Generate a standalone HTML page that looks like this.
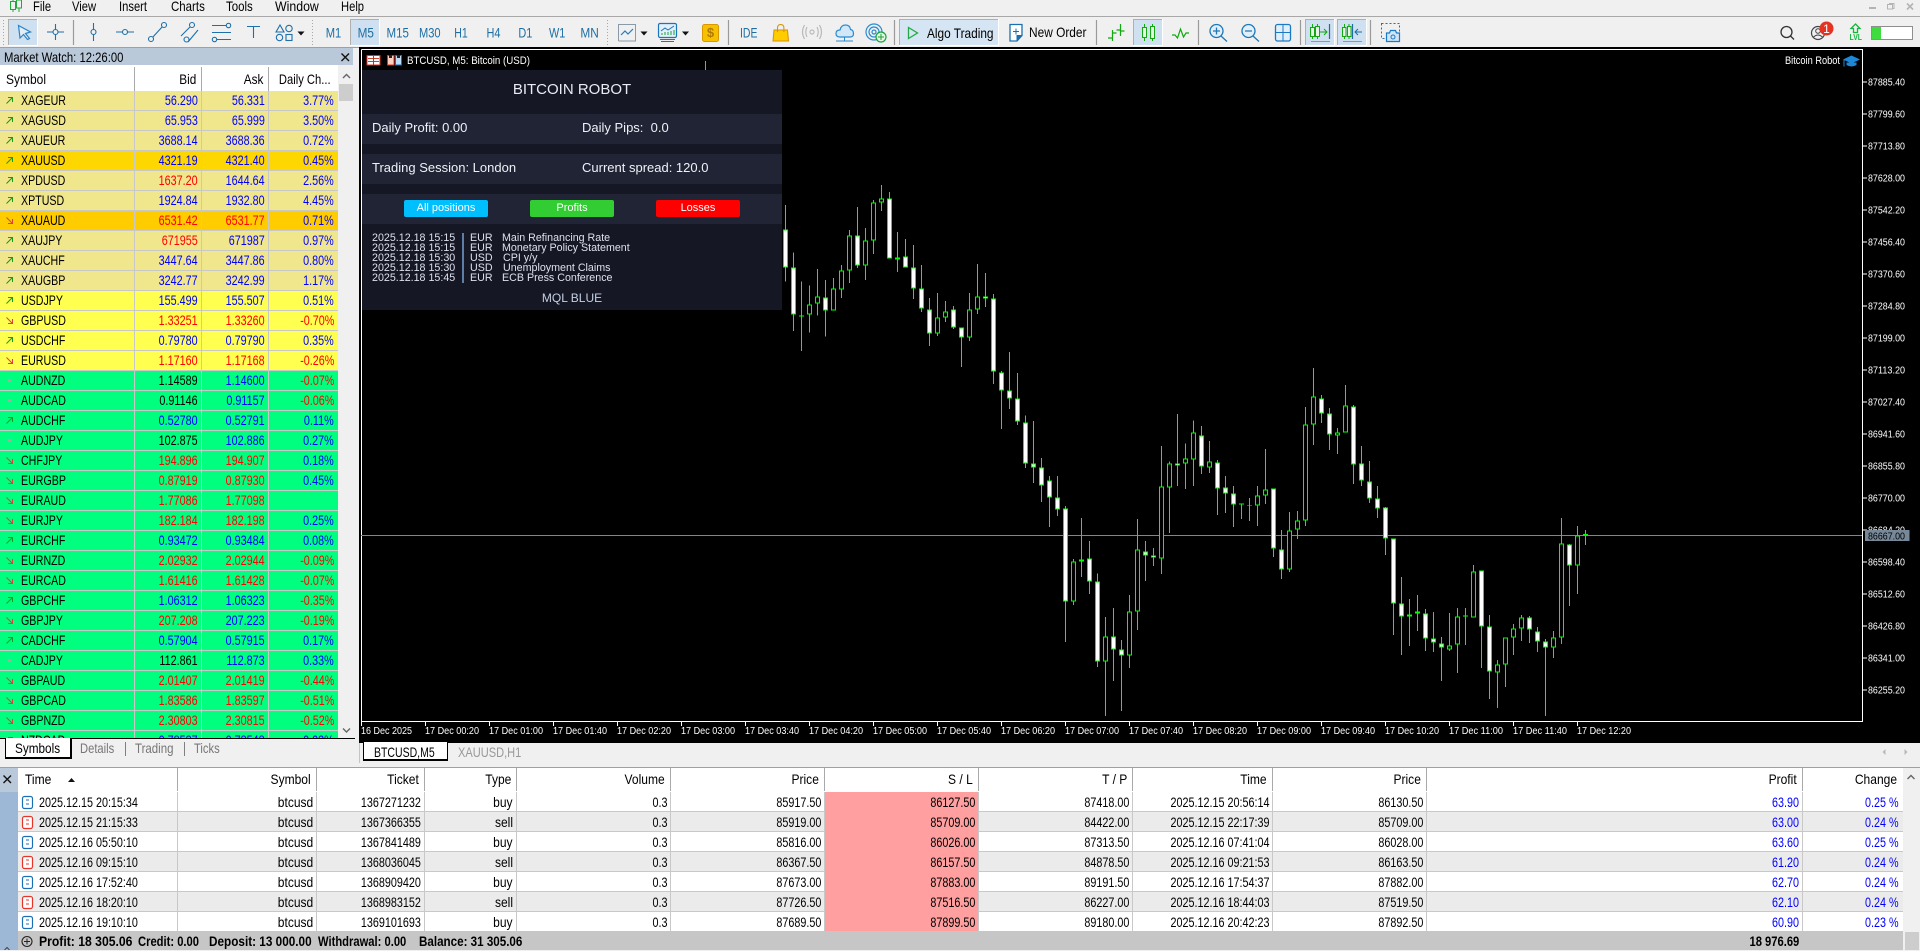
<!DOCTYPE html>
<html><head><meta charset="utf-8"><title>MetaTrader</title>
<style>
html,body{margin:0;padding:0}
body{width:1920px;height:950px;overflow:hidden;background:#f0f0f0;position:relative;font-family:"Liberation Sans",sans-serif;color:#000}
.a{position:absolute}
.t{position:absolute;white-space:nowrap;font-size:14px;line-height:20px;transform:scaleX(.82);transform-origin:0 0}
#mw{position:absolute;left:0;top:91px;width:338px;height:647px;overflow:hidden}
.r{height:19px;border-bottom:1px solid #c8c8c8;position:relative;font-size:14px;line-height:19px;white-space:nowrap}
.r span{position:absolute;top:0;transform:scaleX(.77);transform-origin:100% 0;color:#00f}
.r span:nth-of-type(1){left:21px;color:#000;transform-origin:0 0;transform:scaleX(.76)}
.r span:nth-of-type(2){right:140px}
.r span:nth-of-type(3){right:73px}
.r span:nth-of-type(4){right:4px}
.r span.R{color:#f00}.r span.K{color:#000}
.r svg{position:absolute;left:5px;top:5px;width:9px;height:9px}
.x{background:#f0e68c}.g{background:#ffd700}.o{background:#ffcc00}.y{background:#ffff4f}.s{background:#00ff7f}
#bt{position:absolute;left:18px;top:792px;width:1885px;height:139px;overflow:hidden}
.q{position:relative;height:19px;border-bottom:1px solid #c8c8c8;font-size:14px;line-height:20px;white-space:nowrap;background:#fff}
.q.e{background:#ebebeb}
.q i{position:absolute;left:807px;width:153px;top:0;height:20px;background:#ff9f9f}
.q span,.hd span{position:absolute;top:0;transform:scaleX(.77);transform-origin:100% 0}
.q span:nth-of-type(1){left:21px;transform-origin:0 0}
.q span:nth-of-type(2),.q span:nth-of-type(4){transform:scaleX(.86)}
.q span:nth-of-type(2),.hd span:nth-of-type(2){right:1590px}
.q span:nth-of-type(3),.hd span:nth-of-type(3){right:1482px}
.q span:nth-of-type(4),.hd span:nth-of-type(4){right:1390px}
.q span:nth-of-type(5),.hd span:nth-of-type(5){right:1236px}
.q span:nth-of-type(6),.hd span:nth-of-type(6){right:1082px}
.q span:nth-of-type(7),.hd span:nth-of-type(7){right:928px}
.q span:nth-of-type(8),.hd span:nth-of-type(8){right:774px}
.q span:nth-of-type(9),.hd span:nth-of-type(9){right:634px}
.q span:nth-of-type(10),.hd span:nth-of-type(10){right:480px}
.q span:nth-of-type(11),.hd span:nth-of-type(11){right:104px;color:#00f}
.q span:nth-of-type(12),.hd span:nth-of-type(12){right:4px;color:#00f}
.hd{position:absolute;left:16px;top:767px;width:1885px;height:23px;font-size:14px;line-height:24px;white-space:nowrap}
.hd span{transform:scaleX(.86);color:#000!important}
.hd span:nth-of-type(1){left:8.5px;transform-origin:0 0}
.p{position:absolute;color:#eef1f7;font-size:13px;line-height:14px;white-space:nowrap}
.n{position:absolute;color:#dde1ec;font-size:10.7px;line-height:10px;white-space:nowrap}
.b{position:absolute;top:200px;width:84px;height:17px;border-radius:2px;color:#fff;font-size:11px;line-height:17px;text-align:center}
.tt{font-family:"Liberation Sans",sans-serif}
</style></head>
<body>
<!-- top bars -->
<div class="a" style="left:0;top:16px;width:1920px;height:1px;background:#a8a8a8"></div>
<span class="t" style="left:33px;top:-4px;transform:scaleX(.8)">File</span>
<span class="t" style="left:72px;top:-4px;transform:scaleX(.8)">View</span>
<span class="t" style="left:119px;top:-4px;transform:scaleX(.8)">Insert</span>
<span class="t" style="left:171px;top:-4px;transform:scaleX(.82)">Charts</span>
<span class="t" style="left:226px;top:-4px;transform:scaleX(.82)">Tools</span>
<span class="t" style="left:275px;top:-4px;transform:scaleX(.88)">Window</span>
<span class="t" style="left:341px;top:-4px;transform:scaleX(.8)">Help</span>

<!-- market watch -->
<div class="a" style="left:0;top:47px;width:359px;height:1px;background:#a0a0a0"></div>
<div class="a" style="left:0;top:48px;width:353px;height:17px;background:#b9c9d9"></div>
<span class="t" style="left:4px;top:47px;transform:scaleX(.806)">Market Watch: 12:26:00</span>
<div class="a" style="left:0;top:65px;width:338px;height:26px;background:#fff"></div>
<span class="t" style="left:6px;top:69px;transform:scaleX(.857)">Symbol</span>
<span class="t" style="right:1724px;top:69px;transform:scaleX(.84);transform-origin:100% 0">Bid</span>
<span class="t" style="right:1657px;top:69px;transform:scaleX(.84);transform-origin:100% 0">Ask</span>
<span class="t" style="right:1589px;top:69px;transform:scaleX(.8);transform-origin:100% 0">Daily Ch...</span>
<div class="a" style="left:134px;top:67px;width:1px;height:24px;background:#aaa"></div>
<div class="a" style="left:201px;top:67px;width:1px;height:24px;background:#aaa"></div>
<div class="a" style="left:268px;top:67px;width:1px;height:24px;background:#aaa"></div>
<div class="a" style="left:339px;top:84px;width:14px;height:17px;background:#cdcdcd"></div>

<svg width="0" height="0" style="position:absolute"><defs>
<path id="u" d="M1.5 7.5L7.5 1.5M3 1.5H7.5V6" stroke="#1a9c1a" stroke-width="1" fill="none"/>
<path id="d" d="M1.5 1.5L7.5 7.5M7.5 3V7.5H3" stroke="#e0403a" stroke-width="1" fill="none"/>
<rect id="m" x="3" y="3" width="3" height="3" fill="#a8a8a8"/>
<g id="ib"><rect x="22.5" y="796.5" width="10" height="12" rx="2" fill="#fff" stroke="#1a6fb5" stroke-width="1.2"/><path d="M26 800h3M26 804h3" stroke="#1a6fb5"/></g>
<g id="is"><rect x="22.5" y="796.5" width="10" height="12" rx="2" fill="#fff" stroke="#e5352b" stroke-width="1.2"/><path d="M26 800h3M26 804h3" stroke="#e5352b"/></g>
</defs></svg>

<div id="mw">
<div class="r x"><svg><use href="#u"/></svg><span>XAGEUR</span><span>56.290</span><span>56.331</span><span>3.77%</span></div>
<div class="r x"><svg><use href="#u"/></svg><span>XAGUSD</span><span>65.953</span><span>65.999</span><span>3.50%</span></div>
<div class="r x"><svg><use href="#u"/></svg><span>XAUEUR</span><span>3688.14</span><span>3688.36</span><span>0.72%</span></div>
<div class="r g"><svg><use href="#u"/></svg><span>XAUUSD</span><span>4321.19</span><span>4321.40</span><span>0.45%</span></div>
<div class="r x"><svg><use href="#u"/></svg><span>XPDUSD</span><span class="R">1637.20</span><span>1644.64</span><span>2.56%</span></div>
<div class="r x"><svg><use href="#u"/></svg><span>XPTUSD</span><span>1924.84</span><span>1932.80</span><span>4.45%</span></div>
<div class="r o"><svg><use href="#d"/></svg><span>XAUAUD</span><span class="R">6531.42</span><span class="R">6531.77</span><span>0.71%</span></div>
<div class="r x"><svg><use href="#u"/></svg><span>XAUJPY</span><span class="R">671955</span><span>671987</span><span>0.97%</span></div>
<div class="r x"><svg><use href="#u"/></svg><span>XAUCHF</span><span>3447.64</span><span>3447.86</span><span>0.80%</span></div>
<div class="r x"><svg><use href="#u"/></svg><span>XAUGBP</span><span>3242.77</span><span>3242.99</span><span>1.17%</span></div>
<div class="r y"><svg><use href="#u"/></svg><span>USDJPY</span><span>155.499</span><span>155.507</span><span>0.51%</span></div>
<div class="r y"><svg><use href="#d"/></svg><span>GBPUSD</span><span class="R">1.33251</span><span class="R">1.33260</span><span class="R">-0.70%</span></div>
<div class="r y"><svg><use href="#u"/></svg><span>USDCHF</span><span>0.79780</span><span>0.79790</span><span>0.35%</span></div>
<div class="r y"><svg><use href="#d"/></svg><span>EURUSD</span><span class="R">1.17160</span><span class="R">1.17168</span><span class="R">-0.26%</span></div>
<div class="r s"><svg><use href="#m"/></svg><span>AUDNZD</span><span class="K">1.14589</span><span>1.14600</span><span class="R">-0.07%</span></div>
<div class="r s"><svg><use href="#m"/></svg><span>AUDCAD</span><span class="K">0.91146</span><span>0.91157</span><span class="R">-0.06%</span></div>
<div class="r s"><svg><use href="#u"/></svg><span>AUDCHF</span><span>0.52780</span><span>0.52791</span><span>0.11%</span></div>
<div class="r s"><svg><use href="#m"/></svg><span>AUDJPY</span><span class="K">102.875</span><span>102.886</span><span>0.27%</span></div>
<div class="r s"><svg><use href="#d"/></svg><span>CHFJPY</span><span class="R">194.896</span><span class="R">194.907</span><span>0.18%</span></div>
<div class="r s"><svg><use href="#d"/></svg><span>EURGBP</span><span class="R">0.87919</span><span class="R">0.87930</span><span>0.45%</span></div>
<div class="r s"><svg><use href="#d"/></svg><span>EURAUD</span><span class="R">1.77086</span><span class="R">1.77098</span></div>
<div class="r s"><svg><use href="#d"/></svg><span>EURJPY</span><span class="R">182.184</span><span class="R">182.198</span><span>0.25%</span></div>
<div class="r s"><svg><use href="#u"/></svg><span>EURCHF</span><span>0.93472</span><span>0.93484</span><span>0.08%</span></div>
<div class="r s"><svg><use href="#d"/></svg><span>EURNZD</span><span class="R">2.02932</span><span class="R">2.02944</span><span class="R">-0.09%</span></div>
<div class="r s"><svg><use href="#d"/></svg><span>EURCAD</span><span class="R">1.61416</span><span class="R">1.61428</span><span class="R">-0.07%</span></div>
<div class="r s"><svg><use href="#u"/></svg><span>GBPCHF</span><span>1.06312</span><span>1.06323</span><span class="R">-0.35%</span></div>
<div class="r s"><svg><use href="#d"/></svg><span>GBPJPY</span><span class="R">207.208</span><span>207.223</span><span class="R">-0.19%</span></div>
<div class="r s"><svg><use href="#u"/></svg><span>CADCHF</span><span>0.57904</span><span>0.57915</span><span>0.17%</span></div>
<div class="r s"><svg><use href="#m"/></svg><span>CADJPY</span><span class="K">112.861</span><span>112.873</span><span>0.33%</span></div>
<div class="r s"><svg><use href="#d"/></svg><span>GBPAUD</span><span class="R">2.01407</span><span class="R">2.01419</span><span class="R">-0.44%</span></div>
<div class="r s"><svg><use href="#d"/></svg><span>GBPCAD</span><span class="R">1.83586</span><span class="R">1.83597</span><span class="R">-0.51%</span></div>
<div class="r s"><svg><use href="#d"/></svg><span>GBPNZD</span><span class="R">2.30803</span><span class="R">2.30815</span><span class="R">-0.52%</span></div>
<div class="r s"><svg><use href="#u"/></svg><span>NZDCAD</span><span>0.78537</span><span>0.78548</span><span>0.03%</span></div>
<div class="a" style="left:134px;top:0;width:1px;height:647px;background:#c8c8c8"></div>
<div class="a" style="left:201px;top:0;width:1px;height:647px;background:#c8c8c8"></div>
<div class="a" style="left:268px;top:0;width:1px;height:647px;background:#c8c8c8"></div>
</div>

<!-- MW tabs -->
<div class="a" style="left:0;top:738px;width:355px;height:1px;background:#000"></div>
<div class="a" style="left:5px;top:738px;width:64px;height:19px;background:#fff;border:1px solid #000;border-top:0;border-right-width:2px;border-bottom-width:2px"></div>
<span class="t" style="left:15px;top:738px;transform:scaleX(.84)">Symbols</span>
<span class="t" style="left:80px;top:738px;color:#777;transform:scaleX(.8)">Details</span>
<div class="a" style="left:125px;top:742px;width:1px;height:14px;background:#808080"></div>
<span class="t" style="left:135px;top:738px;color:#777;transform:scaleX(.82)">Trading</span>
<div class="a" style="left:184px;top:742px;width:1px;height:14px;background:#808080"></div>
<span class="t" style="left:194px;top:738px;color:#777;transform:scaleX(.8)">Ticks</span>

<!-- chart bg -->
<div class="a" style="left:359px;top:47px;width:1561px;height:696px;background:#000"></div>

<!-- chart tabs -->
<div class="a" style="left:359px;top:743px;width:1px;height:20px;background:#c4c4c4"></div>
<div class="a" style="left:363px;top:742px;width:83px;height:17px;background:#fff;border:1px solid #000;border-top:0;border-bottom-width:2px"></div>
<span class="t" style="left:374px;top:742px;transform:scaleX(.75)">BTCUSD,M5</span>
<span class="t" style="left:458px;top:742px;color:#999;transform:scaleX(.79)">XAUUSD,H1</span>

<!-- bottom panel -->
<div class="a" style="left:0;top:767px;width:1920px;height:1px;background:#a0a0a0"></div>
<div class="a" style="left:0;top:768px;width:18px;height:182px;background:#9db8d6"></div>
<div class="a" style="left:0;top:768px;width:18px;height:24px;background:#b9c9d9"></div>
<div class="a" style="left:18px;top:768px;width:1885px;height:24px;background:#fff"></div>
<div class="hd"><span>Time</span><span>Symbol</span><span>Ticket</span><span>Type</span><span>Volume</span><span>Price</span><span>S / L</span><span>T / P</span><span>Time</span><span>Price</span><span>Profit</span><span>Change</span></div>
<div id="bt">
<div class="q"><i></i><span>2025.12.15 20:15:34</span><span>btcusd</span><span>1367271232</span><span>buy</span><span>0.3</span><span>85917.50</span><span>86127.50</span><span>87418.00</span><span>2025.12.15 20:56:14</span><span>86130.50</span><span>63.90</span><span>0.25 %</span></div>
<div class="q e"><i></i><span>2025.12.15 21:15:33</span><span>btcusd</span><span>1367366355</span><span>sell</span><span>0.3</span><span>85919.00</span><span>85709.00</span><span>84422.00</span><span>2025.12.15 22:17:39</span><span>85709.00</span><span>63.00</span><span>0.24 %</span></div>
<div class="q"><i></i><span>2025.12.16 05:50:10</span><span>btcusd</span><span>1367841489</span><span>buy</span><span>0.3</span><span>85816.00</span><span>86026.00</span><span>87313.50</span><span>2025.12.16 07:41:04</span><span>86028.00</span><span>63.60</span><span>0.25 %</span></div>
<div class="q e"><i></i><span>2025.12.16 09:15:10</span><span>btcusd</span><span>1368036045</span><span>sell</span><span>0.3</span><span>86367.50</span><span>86157.50</span><span>84878.50</span><span>2025.12.16 09:21:53</span><span>86163.50</span><span>61.20</span><span>0.24 %</span></div>
<div class="q"><i></i><span>2025.12.16 17:52:40</span><span>btcusd</span><span>1368909420</span><span>buy</span><span>0.3</span><span>87673.00</span><span>87883.00</span><span>89191.50</span><span>2025.12.16 17:54:37</span><span>87882.00</span><span>62.70</span><span>0.24 %</span></div>
<div class="q e"><i></i><span>2025.12.16 18:20:10</span><span>btcusd</span><span>1368983152</span><span>sell</span><span>0.3</span><span>87726.50</span><span>87516.50</span><span>86227.00</span><span>2025.12.16 18:44:03</span><span>87519.50</span><span>62.10</span><span>0.24 %</span></div>
<div class="q" style="border-bottom:0;height:20px"><i></i><span>2025.12.16 19:10:10</span><span>btcusd</span><span>1369101693</span><span>buy</span><span>0.3</span><span>87689.50</span><span>87899.50</span><span>89180.00</span><span>2025.12.16 20:42:23</span><span>87892.50</span><span>60.90</span><span>0.23 %</span></div>
</div>
<div class="a" style="left:18px;top:931px;width:1885px;height:19px;background:#c6c6c6"></div>
<span class="t" style="left:39px;top:931px;font-weight:bold;transform:scaleX(.87)">Profit: 18 305.06</span>
<span class="t" style="left:138px;top:931px;font-weight:bold;transform:scaleX(.8)">Credit: 0.00</span>
<span class="t" style="left:208.5px;top:931px;font-weight:bold;transform:scaleX(.84)">Deposit: 13 000.00</span>
<span class="t" style="left:318px;top:931px;font-weight:bold;transform:scaleX(.8)">Withdrawal: 0.00</span>
<span class="t" style="left:419px;top:931px;font-weight:bold;transform:scaleX(.83)">Balance: 31 305.06</span>
<span class="t" style="right:121px;top:931px;font-weight:bold;transform:scaleX(.8);transform-origin:100% 0">18 976.69</span>
<div class="a" style="left:1905px;top:932px;width:14px;height:18px;background:#cdcdcd"></div>

<!-- main svg -->
<svg class="a" style="left:0;top:0" width="1920" height="950" viewBox="0 0 1920 950">
<!-- logo -->
<path d="M13 0V12M19 0V12" stroke="#1faa3a" fill="none"/><rect x="10.5" y="1.5" width="5" height="8" fill="#f0f0f0" stroke="#1faa3a"/><rect x="16.5" y="0" width="5" height="8" fill="#f0f0f0" stroke="#1faa3a"/>
<!-- window controls -->
<path d="M1869 8h7" stroke="#b4b4b4" stroke-width="2"/><path d="M1889 3.5h5v5h-1M1887.5 4.5h5v4.5h-5z" stroke="#b4b4b4" fill="none"/><path d="M1907 3.5l6 6m0-6l-6 6" stroke="#b4b4b4" stroke-width="1.6"/>
<!-- grips -->
<path d="M3.5 20V46M312.5 20V46M607.5 20V46" stroke="#a8a8a8" stroke-dasharray="1 2"/>
<!-- selected buttons -->
<g stroke="#fff" fill="#cfe0f0">
<rect x="8.5" y="19.5" width="29" height="26"/>
<rect x="350.5" y="19.5" width="29" height="26"/>
<rect x="899.5" y="19.5" width="99" height="26" fill="#d5e5f3"/>
<rect x="1133.5" y="19.5" width="29" height="26"/>
<rect x="1305.5" y="19.5" width="29" height="26"/>
<rect x="1337.5" y="19.5" width="29" height="26"/>
</g>
<path d="M8.5 45V19.5H37M350.5 45V19.5H379M899.5 45V19.5H998M1133.5 45V19.5H1162M1305.5 45V19.5H1334M1337.5 45V19.5H1366" stroke="#b0b0b0" fill="none"/>
<!-- dividers -->
<path d="M73.5 20V45M728.5 20V45M894.5 20V45M1096.5 20V45M1198.5 20V45M1300.5 20V45M1370.5 20V45" stroke="#9a9a9a" stroke-width="1.2"/>
<!-- drawing tools -->
<path d="M18.5 25.5L30.5 32L25.5 33.5L29.5 38.5L27.5 39.5L23.5 34.5L20 38Z" fill="#e3eef8" stroke="#2b83c6" stroke-width="1.2"/>
<g stroke="#1f6fa8" fill="#f0f0f0" stroke-width="1.1">
<path d="M47 32H64M55.5 24V40"/><circle cx="55.5" cy="32" r="2.5"/>
<path d="M93.5 23V41"/><circle cx="93.5" cy="32" r="2.5"/>
<path d="M116 32H134"/><circle cx="125" cy="32" r="2.5"/>
<path d="M152 38L163 26"/><circle cx="151" cy="39" r="2.5"/><circle cx="164" cy="25" r="2.5"/>
<path d="M181 36L190 27M188 42L198 30"/><circle cx="192" cy="25" r="2.5"/><circle cx="186.5" cy="39.5" r="2.5"/>
<path d="M212 25.5H226M212 32.5H231M217 39.5H231"/><circle cx="228.5" cy="25.5" r="2.2"/><circle cx="214.5" cy="39.5" r="2.2"/>
<path d="M247 26.5H260M253.5 26.5V38" fill="none"/>
<path d="M276 32L280 25L284 32Z"/><circle cx="289" cy="28.5" r="3.2"/><circle cx="279.5" cy="37.5" r="3.2"/><rect x="286" y="34.5" width="6" height="6"/>
</g>
<path d="M297.5 31.5h7l-3.5 4zM640.5 31.5h7l-3.5 4zM682 31.5h7l-3.5 4z" fill="#111"/>
<!-- timeframes -->
<g class="tt" font-size="14" fill="#1c6ea4" lengthAdjust="spacingAndGlyphs">
<text x="325.7" y="37.5" textLength="15.5" lengthAdjust="spacingAndGlyphs">M1</text>
<text x="357.6" y="37.5" textLength="16.3" lengthAdjust="spacingAndGlyphs">M5</text>
<text x="386.5" y="37.5" textLength="22.4" lengthAdjust="spacingAndGlyphs">M15</text>
<text x="419" y="37.5" textLength="21.6" lengthAdjust="spacingAndGlyphs">M30</text>
<text x="454.3" y="37.5" textLength="13.5" lengthAdjust="spacingAndGlyphs">H1</text>
<text x="486.5" y="37.5" textLength="14" lengthAdjust="spacingAndGlyphs">H4</text>
<text x="518.4" y="37.5" textLength="14" lengthAdjust="spacingAndGlyphs">D1</text>
<text x="549" y="37.5" textLength="16.3" lengthAdjust="spacingAndGlyphs">W1</text>
<text x="580.4" y="37.5" textLength="18.4" lengthAdjust="spacingAndGlyphs">MN</text>
<text x="740" y="37.5" textLength="17.5" lengthAdjust="spacingAndGlyphs">IDE</text>
</g>
<!-- chart type -->
<path d="M618.5 41V24.5H635.5V41H618.5" fill="none" stroke="#8a9aa8"/><path d="M621 35l4-4 3 3 5-5" fill="none" stroke="#2a7ab8" stroke-width="1.2"/>
<!-- template -->
<rect x="658.5" y="23.5" width="18" height="14" rx="1.5" fill="#e3eff9" stroke="#1c75bc" stroke-width="1.2"/><path d="M660 39.5h15M661 41.5h13" stroke="#1c75bc"/><path d="M662 35v-2M665 35v-3M668 35v-3M671 35v-4M674 35v-5" stroke="#14a03c"/><path d="M661 31l4-3 3 2 6-4" fill="none" stroke="#1c75bc"/>
<!-- gold $ -->
<rect x="702.5" y="24.5" width="16" height="17" rx="2" fill="#f8c100" stroke="#d89800"/><text class="tt" x="710.5" y="37" font-size="13" font-weight="bold" fill="#b07a00" text-anchor="middle">$</text>
<!-- bag -->
<path d="M774 30h13.5l1 11h-15.5z" fill="#ffcc00" stroke="#d89000"/><path d="M777.5 32v-4q0-3.5 3.2-3.5t3.2 3.5v4" fill="none" stroke="#d89000"/>
<!-- signal -->
<g fill="none" stroke="#bbb" stroke-width="1.2"><circle cx="812" cy="32" r="2"/><path d="M807 27q-2.500 5 0 10M817 27q2.500 5 0 10M804.500 25q-4 7 0 14M819.500 25q4 7 0 14"/></g>
<!-- cloud -->
<path d="M840 37q-4 0-4-3.500t4-3.500q1-5 5.500-5t5 4.500q3 .5 3 4t-3.500 3.500z" fill="#d2e8f8" stroke="#2a8ad0" stroke-width="1.2"/><path d="M836 41h17M844.500 37v4" stroke="#2a8ad0"/>
<!-- radar -->
<g fill="none" stroke="#2a8ad0" stroke-width="1.2"><circle cx="874" cy="32" r="8"/><circle cx="874" cy="32" r="5"/><circle cx="874" cy="32" r="2"/></g><circle cx="881" cy="37" r="5" fill="#e6f5e6" stroke="#17a43a" stroke-width="1.2"/><path d="M878 37h6M881 34v6" stroke="#17a43a"/>
<!-- algo -->
<path d="M908.500 27.500L917.500 33L908.500 38.500Z" fill="none" stroke="#22aa44" stroke-width="1.3"/>
<text class="tt" x="927" y="38" font-size="14" fill="#000" textLength="66.500" lengthAdjust="spacingAndGlyphs">Algo Trading</text>
<!-- new order -->
<path d="M1010 24.500h12v11l-5 5.500h-7z" fill="#fff" stroke="#1d6fb0" stroke-width="1.3"/><path d="M1022 35.500h-5v5.500" fill="#1d6fb0" stroke="#1d6fb0"/><path d="M1013 31.500h6M1016 28.500v6" stroke="#1d6fb0"/>
<text class="tt" x="1029" y="37" font-size="14" fill="#000" textLength="57.500" lengthAdjust="spacingAndGlyphs">New Order</text>
<!-- bars -->
<path d="M1112.500 30V41M1108 38h4.500M1112.500 33h4M1120.500 24V36M1116.500 30h4M1120.500 31h4" stroke="#12a812" fill="none" stroke-width="1.2"/>
<!-- candles btn -->
<path d="M1144.500 24V41M1152.500 24V41" stroke="#12a812"/><rect x="1142.500" y="27.500" width="4" height="10" fill="#e8f4e8" stroke="#12a812"/><rect x="1150.500" y="26.500" width="4" height="12" fill="#e8f4e8" stroke="#12a812"/>
<path d="M1172 35h3l2.500 3 3-9 3 8 2.500-4h3" fill="none" stroke="#12a812" stroke-width="1.2"/>
<!-- zoom -->
<g stroke="#1f77b4" stroke-width="1.3"><circle cx="1216.500" cy="31" r="6.500" fill="#e0effa"/><path d="M1221 36l6 5.500M1213 31h7M1216.500 27.500v7" fill="none"/><circle cx="1248.500" cy="31" r="6.500" fill="#e0effa"/><path d="M1253 36l6 5.500M1245 31h7" fill="none"/></g>
<rect x="1275.500" y="24.500" width="15" height="16.500" rx="2" fill="#e0effa" stroke="#1c7ac4" stroke-width="1.3"/><path d="M1283 24.500V41M1275.500 32.500H1290.500" stroke="#1c7ac4"/>
<!-- autoscroll / shift -->
<path d="M1312.500 24V39M1317.500 24V39" stroke="#12a812"/><rect x="1310.500" y="27.500" width="4" height="9" fill="#e8f4e8" stroke="#12a812"/><rect x="1315.500" y="26.500" width="4" height="10" fill="#e8f4e8" stroke="#12a812"/>
<path d="M1320 32h7M1324 29l3 3-3 3" fill="none" stroke="#12a812"/><path d="M1329.500 24V39" stroke="#1c6ea4" stroke-width="1.2"/><path d="M1311 41.500h19" stroke="#8a9aa8"/>
<path d="M1344.500 24V39M1349 24V39" stroke="#12a812"/><rect x="1342.500" y="27.500" width="3.500" height="9" fill="#e8f4e8" stroke="#12a812"/><rect x="1347.500" y="26.500" width="3.500" height="10" fill="#e8f4e8" stroke="#12a812"/>
<path d="M1352.500 24V39" stroke="#1c6ea4" stroke-width="1.2"/><path d="M1362 32h-7M1358 29l-3 3 3 3" fill="none" stroke="#1c6ea4"/><path d="M1343 41.500h19" stroke="#8a9aa8"/>
<!-- screenshot -->
<rect x="1381.500" y="23.500" width="18" height="15" fill="none" stroke="#2a6ea8" stroke-dasharray="2 2"/><path d="M1386.500 33h3l1-2.500h5l1 2.500h3v8.500h-13z" fill="#cfe6f7" stroke="#1c7ac4" stroke-width="1.2"/><circle cx="1393" cy="37" r="2" fill="none" stroke="#1c7ac4"/>
<!-- search/user -->
<circle cx="1786.500" cy="32" r="5.500" fill="none" stroke="#333" stroke-width="1.3"/><path d="M1790.500 36l3.500 3.500" stroke="#333" stroke-width="1.3"/>
<circle cx="1818" cy="33" r="6.500" fill="none" stroke="#444" stroke-width="1.2"/><circle cx="1818" cy="31" r="2.300" fill="none" stroke="#444"/><path d="M1813.500 37q4.500-4 9 0" fill="none" stroke="#444"/>
<circle cx="1826.500" cy="28.500" r="7" fill="#e63223"/><text class="tt" x="1826.500" y="33" font-size="12" fill="#fff" text-anchor="middle">1</text>
<!-- LVL -->
<path d="M1855.500 24l4.500 4.500h-2.500v4h-4v-4h-2.500z" fill="none" stroke="#14b83c" stroke-width="1.3"/>
<text class="tt" x="1849.500" y="40" font-size="8" font-weight="bold" fill="#14b83c" textLength="12.500" lengthAdjust="spacingAndGlyphs">LVL</text>
<rect x="1871.500" y="26.500" width="41" height="13" fill="#fff" stroke="#8e8e8e"/><rect x="1872" y="27" width="9" height="12" fill="#3fdc3f"/>

<!-- MW close, chevrons, misc -->
<path d="M341.500 53.500l7.500 7.500m0-7.500l-7.500 7.500" stroke="#111" stroke-width="1.4"/>
<path d="M343 78l3.500-3.500 3.500 3.500M343 728.500l3.500 3.500 3.500-3.500M1907.500 779l3.500-3.500 3.500 3.500" fill="none" stroke="#666" stroke-width="1.4"/>
<path d="M3.500 775.500l7.500 7.500m0-7.500l-7.500 7.500" stroke="#111" stroke-width="1.4"/>
<path d="M4.500 950l2.500-2.500 2.500 2.500" fill="none" stroke="#444"/>
<path d="M1885.500 749v6l-3-3zM1904.500 749v6l3-3z" fill="#b8b8b8"/>
<!-- table grid -->
<g shape-rendering="crispEdges">
<path d="M177.500 768V791M316.500 768V791M424.500 768V791M516.500 768V791M670.500 768V791M824.500 768V791M978.500 768V791M1132.500 768V791M1272.500 768V791M1426.500 768V791M1802.500 768V791" stroke="#a9a9a9"/>
<path d="M177.500 792V931M316.500 792V931M424.500 792V931M516.500 792V931M670.500 792V931M824.500 792V931M978.500 792V931M1132.500 792V931M1272.500 792V931M1426.500 792V931M1802.500 792V931" stroke="#c8c8c8"/>
</g>
<path d="M68 777l3.500-4 3.500 4z" fill="#111" transform="translate(0 5)"/>
<use href="#ib"/><use href="#is" y="20"/><use href="#ib" y="40"/><use href="#is" y="60"/><use href="#ib" y="80"/><use href="#is" y="100"/><use href="#ib" y="120"/>
<circle cx="27" cy="941.500" r="5" fill="none" stroke="#222" stroke-width="1.1"/><path d="M24 941.500h6M27 938.500v6" stroke="#222"/>

<!-- chart frame -->
<g shape-rendering="crispEdges" fill="none">
<path d="M361.500 49.500H1862.500V721.500H361.500" stroke="#fff"/>
<path d="M361.500 49.500V721.500" stroke="#fff"/>
<path d="M361 535.500H1862" stroke="#778899"/>
<path d="M1863 82h4M1863 114h4M1863 146h4M1863 178h4M1863 210h4M1863 242h4M1863 274h4M1863 306h4M1863 338h4M1863 370h4M1863 402h4M1863 434h4M1863 466h4M1863 498h4M1863 530h4M1863 562h4M1863 594h4M1863 626h4M1863 658h4M1863 690h4" stroke="#fff"/>
<path d="M361.500 721v5M425.500 721v5M489.500 721v5M553.500 721v5M617.500 721v5M681.500 721v5M745.500 721v5M809.500 721v5M873.500 721v5M937.500 721v5M1001.500 721v5M1065.500 721v5M1129.500 721v5M1193.500 721v5M1257.500 721v5M1321.500 721v5M1385.500 721v5M1449.500 721v5M1513.500 721v5M1577.500 721v5" stroke="#fff"/>
<path d="M457.500 67V70M705.500 61V70" stroke="#00ff00"/>
</g>

<!-- candles -->
<g transform="translate(0 170) scale(1 .33333)" shape-rendering="crispEdges">
<path fill="#00ff00" d="M785 105h1V335h-1zM783 178h5V292h-5zM793 247h1V483h-1zM791 292h5V433h-5zM801 334h1V543h-1zM799 436h5V440h-5zM809 346h1V488h-1zM807 403h5V434h-5zM817 297h1V437h-1zM815 379h5V401h-5zM825 330h1V500h-1zM823 382h5V422h-5zM833 324h1V422h-1zM831 355h5V421h-5zM841 285h1V384h-1zM839 301h5V359h-5zM849 180h1V339h-1zM847 196h5V302h-5zM857 111h1V294h-1zM855 196h5V287h-5zM865 174h1V330h-1zM863 211h5V287h-5zM873 90h1V252h-1zM871 97h5V212h-5zM881 45h1V123h-1zM879 85h5V98h-5zM889 66h1V266h-1zM887 85h5V266h-5zM897 186h1V306h-1zM895 262h5V269h-5zM905 207h1V293h-1zM903 259h5V292h-5zM913 225h1V387h-1zM911 292h5V355h-5zM921 285h1V426h-1zM919 355h5V416h-5zM929 384h1V528h-1zM927 418h5V491h-5zM937 369h1V498h-1zM935 442h5V491h-5zM945 393h1V456h-1zM943 424h5V442h-5zM953 408h1V477h-1zM951 418h5V473h-5zM961 473h1V591h-1zM959 473h5V503h-5zM969 369h1V513h-1zM967 418h5V503h-5zM977 282h1V432h-1zM975 379h5V419h-5zM985 309h1V411h-1zM983 379h5V385h-5zM993 372h1V642h-1zM991 385h5V605h-5zM1001 603h1V777h-1zM999 607h5V661h-5zM1009 546h1V717h-1zM1007 661h5V686h-5zM1017 609h1V765h-1zM1015 685h5V755h-5zM1025 736h1V894h-1zM1023 757h5V881h-5zM1033 753h1V939h-1zM1031 880h5V892h-5zM1041 864h1V996h-1zM1039 892h5V947h-5zM1049 918h1V1071h-1zM1047 931h5V983h-5zM1057 918h1V1038h-1zM1055 982h5V1019h-5zM1065 1008h1V1416h-1zM1063 1015h5V1295h-5zM1073 1167h1V1305h-1zM1071 1174h5V1295h-5zM1081 1044h1V1221h-1zM1079 1168h5V1174h-5zM1089 1113h1V1272h-1zM1087 1165h5V1235h-5zM1097 1210h1V1491h-1zM1095 1234h5V1475h-5zM1105 1341h1V1638h-1zM1103 1399h5V1475h-5zM1113 1314h1V1533h-1zM1111 1399h5V1438h-5zM1121 1410h1V1623h-1zM1119 1438h5V1457h-5zM1129 1275h1V1494h-1zM1127 1324h5V1457h-5zM1137 1047h1V1380h-1zM1135 1138h5V1324h-5zM1145 1113h1V1233h-1zM1143 1144h5V1157h-5zM1153 1134h1V1188h-1zM1151 1156h5V1162h-5zM1161 828h1V1212h-1zM1159 949h5V1165h-5zM1169 874h1V1089h-1zM1167 880h5V953h-5zM1177 732h1V948h-1zM1175 880h5V886h-5zM1185 820h1V957h-1zM1183 865h5V880h-5zM1193 751h1V948h-1zM1191 787h5V868h-5zM1201 768h1V912h-1zM1199 796h5V889h-5zM1209 813h1V909h-1zM1207 874h5V892h-5zM1217 870h1V1035h-1zM1215 877h5V955h-5zM1225 918h1V1029h-1zM1223 952h5V970h-5zM1233 948h1V1071h-1zM1231 970h5V1003h-5zM1241 1002h1V1047h-1zM1239 1000h5V1003h-5zM1249 984h1V1053h-1zM1247 1006h5V1008h-5zM1257 948h1V1068h-1zM1255 976h5V1006h-5zM1265 837h1V1002h-1zM1263 958h5V977h-5zM1273 955h1V1161h-1zM1271 955h5V1136h-5zM1281 1080h1V1227h-1zM1279 1138h5V1198h-5zM1289 1026h1V1206h-1zM1287 1081h5V1198h-5zM1297 1023h1V1107h-1zM1295 1051h5V1078h-5zM1305 711h1V1068h-1zM1303 763h5V1052h-5zM1313 594h1V825h-1zM1311 679h5V763h-5zM1321 675h1V759h-1zM1319 685h5V730h-5zM1329 714h1V840h-1zM1327 730h5V793h-5zM1337 774h1V852h-1zM1335 787h5V796h-5zM1345 645h1V788h-1zM1343 706h5V787h-5zM1353 705h1V942h-1zM1351 709h5V883h-5zM1361 828h1V948h-1zM1359 880h5V931h-5zM1369 873h1V999h-1zM1367 934h5V985h-5zM1377 948h1V1044h-1zM1375 985h5V1015h-5zM1385 1011h1V1155h-1zM1383 1012h5V1106h-5zM1393 1105h1V1395h-1zM1391 1105h5V1300h-5zM1401 1221h1V1455h-1zM1399 1300h5V1339h-5zM1409 1287h1V1428h-1zM1407 1333h5V1340h-5zM1417 1275h1V1383h-1zM1415 1324h5V1331h-5zM1425 1317h1V1443h-1zM1423 1330h5V1405h-5zM1433 1326h1V1446h-1zM1431 1405h5V1418h-5zM1441 1401h1V1533h-1zM1439 1420h5V1432h-5zM1449 1329h1V1443h-1zM1447 1426h5V1438h-5zM1457 1314h1V1509h-1zM1455 1339h5V1423h-5zM1465 1314h1V1425h-1zM1463 1336h5V1340h-5zM1473 1185h1V1343h-1zM1471 1204h5V1343h-5zM1481 1201h1V1494h-1zM1479 1201h5V1369h-5zM1489 1335h1V1587h-1zM1487 1369h5V1504h-5zM1497 1470h1V1614h-1zM1495 1483h5V1508h-5zM1505 1402h1V1551h-1zM1503 1402h5V1484h-5zM1513 1362h1V1455h-1zM1511 1375h5V1403h-5zM1521 1335h1V1413h-1zM1519 1342h5V1376h-5zM1529 1338h1V1419h-1zM1527 1342h5V1378h-5zM1537 1371h1V1446h-1zM1535 1384h5V1415h-5zM1545 1407h1V1638h-1zM1543 1414h5V1432h-5zM1553 1383h1V1464h-1zM1551 1402h5V1433h-5zM1561 1044h1V1422h-1zM1559 1120h5V1402h-5zM1569 1122h1V1308h-1zM1567 1123h5V1186h-5zM1577 1068h1V1272h-1zM1575 1096h5V1186h-5zM1585 1080h1V1125h-1zM1583 1092h5V1097h-5z"/>
<path fill="#000" d="M808 406h3V431h-3zM816 382h3V398h-3zM832 358h3V418h-3zM840 304h3V356h-3zM848 199h3V299h-3zM864 214h3V284h-3zM872 100h3V209h-3zM880 88h3V95h-3zM896 265h3V266h-3zM936 445h3V488h-3zM944 427h3V439h-3zM968 421h3V500h-3zM976 382h3V416h-3zM1072 1177h3V1292h-3zM1080 1171h3V1171h-3zM1104 1402h3V1472h-3zM1128 1327h3V1454h-3zM1136 1141h3V1321h-3zM1160 952h3V1162h-3zM1168 883h3V950h-3zM1184 868h3V877h-3zM1192 790h3V865h-3zM1208 877h3V889h-3zM1256 979h3V1003h-3zM1264 961h3V974h-3zM1288 1084h3V1195h-3zM1296 1054h3V1075h-3zM1304 766h3V1049h-3zM1312 682h3V760h-3zM1336 790h3V793h-3zM1344 709h3V784h-3zM1408 1336h3V1337h-3zM1416 1327h3V1328h-3zM1448 1429h3V1435h-3zM1456 1342h3V1420h-3zM1472 1207h3V1340h-3zM1496 1486h3V1505h-3zM1504 1405h3V1481h-3zM1512 1378h3V1400h-3zM1520 1345h3V1373h-3zM1552 1405h3V1430h-3zM1560 1123h3V1399h-3zM1576 1099h3V1183h-3z"/>
<path fill="#fff" d="M784 181h3V289h-3zM792 295h3V430h-3zM824 385h3V419h-3zM856 199h3V284h-3zM888 88h3V263h-3zM904 262h3V289h-3zM912 295h3V352h-3zM920 358h3V413h-3zM928 421h3V488h-3zM952 421h3V470h-3zM960 476h3V500h-3zM984 381h3V383h-3zM992 388h3V602h-3zM1000 610h3V658h-3zM1008 664h3V683h-3zM1016 688h3V752h-3zM1024 760h3V878h-3zM1032 883h3V889h-3zM1040 895h3V944h-3zM1048 934h3V980h-3zM1056 985h3V1016h-3zM1064 1018h3V1292h-3zM1088 1168h3V1232h-3zM1096 1237h3V1472h-3zM1112 1402h3V1435h-3zM1120 1441h3V1454h-3zM1144 1147h3V1154h-3zM1152 1158h3V1160h-3zM1176 882h3V884h-3zM1200 799h3V886h-3zM1216 880h3V952h-3zM1224 955h3V967h-3zM1232 973h3V1000h-3zM1272 958h3V1133h-3zM1280 1141h3V1195h-3zM1320 688h3V727h-3zM1328 733h3V790h-3zM1352 712h3V880h-3zM1360 883h3V928h-3zM1368 937h3V982h-3zM1376 988h3V1012h-3zM1384 1015h3V1103h-3zM1392 1108h3V1297h-3zM1400 1303h3V1336h-3zM1424 1333h3V1402h-3zM1432 1408h3V1415h-3zM1440 1423h3V1429h-3zM1480 1204h3V1366h-3zM1488 1372h3V1501h-3zM1528 1345h3V1375h-3zM1536 1387h3V1412h-3zM1544 1417h3V1429h-3zM1568 1126h3V1183h-3z"/>
</g>

<!-- price labels -->
<g class="tt" font-size="10" fill="#fff">
<text x="1868" y="85.500" textLength="37" lengthAdjust="spacingAndGlyphs">87885.40</text>
<text x="1868" y="117.500" textLength="37" lengthAdjust="spacingAndGlyphs">87799.60</text>
<text x="1868" y="149.500" textLength="37" lengthAdjust="spacingAndGlyphs">87713.80</text>
<text x="1868" y="181.500" textLength="37" lengthAdjust="spacingAndGlyphs">87628.00</text>
<text x="1868" y="213.500" textLength="37" lengthAdjust="spacingAndGlyphs">87542.20</text>
<text x="1868" y="245.500" textLength="37" lengthAdjust="spacingAndGlyphs">87456.40</text>
<text x="1868" y="277.500" textLength="37" lengthAdjust="spacingAndGlyphs">87370.60</text>
<text x="1868" y="309.500" textLength="37" lengthAdjust="spacingAndGlyphs">87284.80</text>
<text x="1868" y="341.500" textLength="37" lengthAdjust="spacingAndGlyphs">87199.00</text>
<text x="1868" y="373.500" textLength="37" lengthAdjust="spacingAndGlyphs">87113.20</text>
<text x="1868" y="405.500" textLength="37" lengthAdjust="spacingAndGlyphs">87027.40</text>
<text x="1868" y="437.500" textLength="37" lengthAdjust="spacingAndGlyphs">86941.60</text>
<text x="1868" y="469.500" textLength="37" lengthAdjust="spacingAndGlyphs">86855.80</text>
<text x="1868" y="501.500" textLength="37" lengthAdjust="spacingAndGlyphs">86770.00</text>
<text x="1868" y="533.500" textLength="37" lengthAdjust="spacingAndGlyphs">86684.20</text>
<text x="1868" y="565.500" textLength="37" lengthAdjust="spacingAndGlyphs">86598.40</text>
<text x="1868" y="597.500" textLength="37" lengthAdjust="spacingAndGlyphs">86512.60</text>
<text x="1868" y="629.500" textLength="37" lengthAdjust="spacingAndGlyphs">86426.80</text>
<text x="1868" y="661.500" textLength="37" lengthAdjust="spacingAndGlyphs">86341.00</text>
<text x="1868" y="693.500" textLength="37" lengthAdjust="spacingAndGlyphs">86255.20</text>
</g>
<rect x="1865" y="530" width="44.500" height="11" fill="#778899"/>
<text class="tt" x="1868" y="539.500" font-size="10" fill="#000" textLength="37" lengthAdjust="spacingAndGlyphs">86667.00</text>
<!-- time labels -->
<g class="tt" font-size="10" fill="#fff">
<text x="361" y="734" textLength="51" lengthAdjust="spacingAndGlyphs">16 Dec 2025</text>
<text x="425" y="734" textLength="54" lengthAdjust="spacingAndGlyphs">17 Dec 00:20</text>
<text x="489" y="734" textLength="54" lengthAdjust="spacingAndGlyphs">17 Dec 01:00</text>
<text x="553" y="734" textLength="54" lengthAdjust="spacingAndGlyphs">17 Dec 01:40</text>
<text x="617" y="734" textLength="54" lengthAdjust="spacingAndGlyphs">17 Dec 02:20</text>
<text x="681" y="734" textLength="54" lengthAdjust="spacingAndGlyphs">17 Dec 03:00</text>
<text x="745" y="734" textLength="54" lengthAdjust="spacingAndGlyphs">17 Dec 03:40</text>
<text x="809" y="734" textLength="54" lengthAdjust="spacingAndGlyphs">17 Dec 04:20</text>
<text x="873" y="734" textLength="54" lengthAdjust="spacingAndGlyphs">17 Dec 05:00</text>
<text x="937" y="734" textLength="54" lengthAdjust="spacingAndGlyphs">17 Dec 05:40</text>
<text x="1001" y="734" textLength="54" lengthAdjust="spacingAndGlyphs">17 Dec 06:20</text>
<text x="1065" y="734" textLength="54" lengthAdjust="spacingAndGlyphs">17 Dec 07:00</text>
<text x="1129" y="734" textLength="54" lengthAdjust="spacingAndGlyphs">17 Dec 07:40</text>
<text x="1193" y="734" textLength="54" lengthAdjust="spacingAndGlyphs">17 Dec 08:20</text>
<text x="1257" y="734" textLength="54" lengthAdjust="spacingAndGlyphs">17 Dec 09:00</text>
<text x="1321" y="734" textLength="54" lengthAdjust="spacingAndGlyphs">17 Dec 09:40</text>
<text x="1385" y="734" textLength="54" lengthAdjust="spacingAndGlyphs">17 Dec 10:20</text>
<text x="1449" y="734" textLength="54" lengthAdjust="spacingAndGlyphs">17 Dec 11:00</text>
<text x="1513" y="734" textLength="54" lengthAdjust="spacingAndGlyphs">17 Dec 11:40</text>
<text x="1577" y="734" textLength="54" lengthAdjust="spacingAndGlyphs">17 Dec 12:20</text>
</g>
<!-- chart title -->
<rect x="367" y="55.500" width="13" height="9.500" fill="#fff" stroke="#e03020"/><path d="M368 58.500h11M368 61.500h11" stroke="#d04030"/><path d="M373.500 56v9" stroke="#2060c0"/>
<rect x="387.500" y="55.500" width="6.500" height="9.500" fill="#ffd0c0" stroke="#e03020"/><rect x="395.500" y="55.500" width="6" height="9.500" fill="#bcdcf8" stroke="#1070c0"/><rect x="389" y="55" width="3" height="3" fill="#222"/><rect x="397" y="55" width="3" height="3" fill="#222"/>
<text class="tt" x="407" y="64" font-size="11" fill="#fff" textLength="123" lengthAdjust="spacingAndGlyphs">BTCUSD, M5:  Bitcoin (USD)</text>
<text class="tt" x="1785" y="64" font-size="11" fill="#fff" textLength="55" lengthAdjust="spacingAndGlyphs">Bitcoin Robot</text>
<path d="M1843 59.500L1851.500 55.500L1860 59.500L1851.500 63.500Z" fill="#1e88d8"/><path d="M1846.500 62.500v2.500q5 3 10 0v-2.500z" fill="#1e88d8"/><path d="M1844 60v6.500" stroke="#1e88d8"/>
</svg>

<!-- robot panel -->
<div class="a" style="left:362px;top:70px;width:420px;height:240px;background:#151724"></div>
<div class="a" style="left:362px;top:114px;width:420px;height:30px;background:#212435"></div>
<div class="a" style="left:362px;top:154px;width:420px;height:30px;background:#212435"></div>
<div class="a" style="left:362px;top:194px;width:420px;height:30px;background:#212435"></div>
<div class="a" style="left:362px;top:81px;width:420px;text-align:center;color:#e8ecf4;font-size:15px;line-height:18px">BITCOIN ROBOT</div>
<div class="p" style="left:372px;top:121px">Daily Profit: 0.00</div>
<div class="p" style="left:582px;top:121px">Daily Pips:&nbsp; 0.0</div>
<div class="p" style="left:372px;top:161px">Trading Session: London</div>
<div class="p" style="left:582px;top:161px">Current spread: 120.0</div>
<div class="b" style="left:404px;background:#00bfff">All positions</div>
<div class="b" style="left:530px;background:#32cd32">Profits</div>
<div class="b" style="left:656px;background:#ff0000">Losses</div>
<div class="a" style="left:462px;top:233px;width:2px;height:50px;background:#5f7ea6"></div>
<div class="n" style="left:372px;top:233px">2025.12.18 15:15</div><div class="n" style="left:470px;top:233px">EUR</div><div class="n" style="left:502px;top:233px">Main Refinancing Rate</div>
<div class="n" style="left:372px;top:243px">2025.12.18 15:15</div><div class="n" style="left:470px;top:243px">EUR</div><div class="n" style="left:502px;top:243px">Monetary Policy Statement</div>
<div class="n" style="left:372px;top:253px">2025.12.18 15:30</div><div class="n" style="left:470px;top:253px">USD</div><div class="n" style="left:503px;top:253px">CPI y/y</div>
<div class="n" style="left:372px;top:263px">2025.12.18 15:30</div><div class="n" style="left:470px;top:263px">USD</div><div class="n" style="left:503px;top:263px">Unemployment Claims</div>
<div class="n" style="left:372px;top:273px">2025.12.18 15:45</div><div class="n" style="left:470px;top:273px">EUR</div><div class="n" style="left:502px;top:273px">ECB Press Conference</div>
<div class="a" style="left:362px;top:291px;width:420px;text-align:center;color:#c4d0e4;font-size:12px;line-height:14px">MQL BLUE</div>
</body></html>
